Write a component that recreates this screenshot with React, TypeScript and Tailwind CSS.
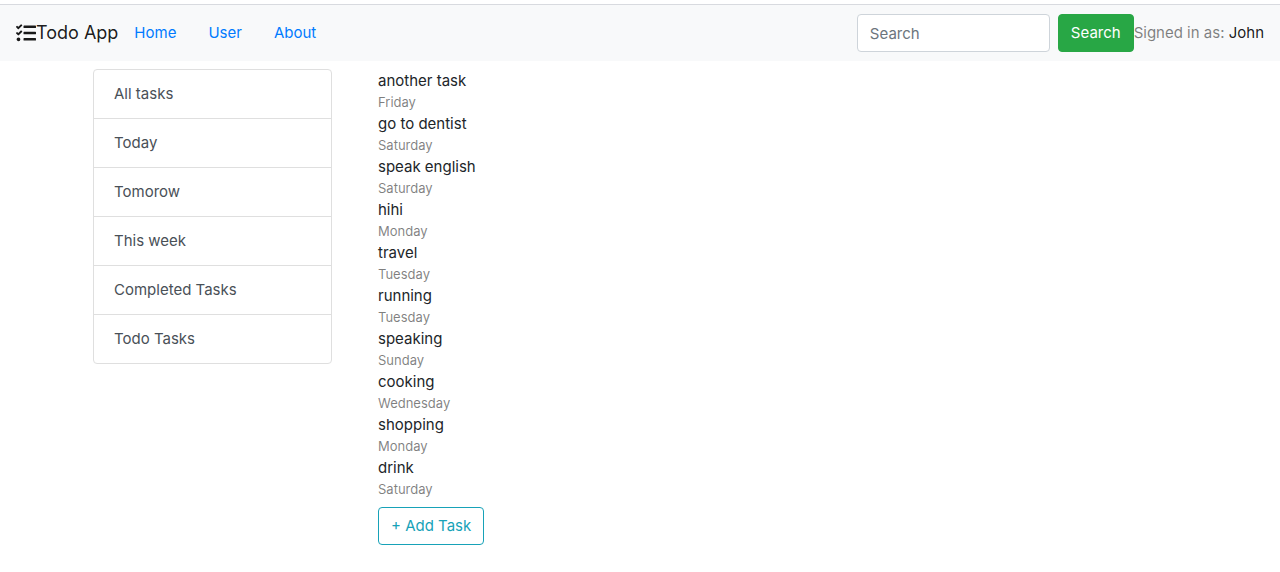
import { FaTasks } from "react-icons/fa";

const navLinks = ["Home", "User", "About"];

const filters = ["All tasks", "Today", "Tomorow", "This week", "Completed Tasks", "Todo Tasks"];

const tasks = [
  { title: "another task", day: "Friday" },
  { title: "go to dentist", day: "Saturday" },
  { title: "speak english", day: "Saturday" },
  { title: "hihi", day: "Monday" },
  { title: "travel", day: "Tuesday" },
  { title: "running", day: "Tuesday" },
  { title: "speaking", day: "Sunday" },
  { title: "cooking", day: "Wednesday" },
  { title: "shopping", day: "Monday" },
  { title: "drink", day: "Saturday" },
];

function Navbar() {
  return (
    <header className="mt-1 flex items-center border-t border-[#d8dadf] bg-[#f8f9fa] px-4 py-2">
      <a href="#" className="flex items-center text-lg leading-[30px] text-black/90">
        <FaTasks className="size-5" aria-hidden="true" />
        Todo App
      </a>
      <nav className="flex">
        {navLinks.map((label) => (
          <a key={label} href="#" className="px-4 py-2 leading-6 text-[#007bff]">
            {label}
          </a>
        ))}
      </nav>
      <form className="ml-auto flex gap-2" onSubmit={(e) => e.preventDefault()}>
        <input
          type="text"
          aria-label="Search"
          placeholder="Search"
          className="h-[38px] w-[193px] rounded border border-[#ced4da] bg-white px-3 text-[#495057] placeholder:text-[#6c757d]"
        />
        <button type="submit" className="h-[38px] rounded border border-[#28a745] bg-[#28a745] px-3 text-white">
          Search
        </button>
      </form>
      <p className="leading-6 text-black/50">
        Signed in as:{" "}
        <a href="#" className="text-black/90">
          John
        </a>
      </p>
    </header>
  );
}

export default function App() {
  return (
    <div className="font-['Inter',sans-serif] text-[15px] text-[#212529]">
      <Navbar />
      <main className="mx-auto grid max-w-[1140px] grid-cols-4">
        <aside className="px-[15px]">
          <div className="m-2 divide-y divide-[#dfdfdf] rounded border border-[#dfdfdf]">
            {filters.map((label) => (
              <button key={label} type="button" className="block w-full px-5 py-3 text-left leading-6 text-[#495057]">
                {label}
              </button>
            ))}
          </div>
        </aside>
        <section className="col-span-3 px-[15px]">
          <ul className="mx-2 mt-2">
            {tasks.map((task) => (
              <li key={task.title}>
                <p className="leading-6">{task.title}</p>
                <p className="text-[13px] leading-[19px] text-black/50">{task.day}</p>
              </li>
            ))}
          </ul>
          <button type="button" className="m-2 h-[38px] rounded border border-[#17a2b8] px-3 text-[#17a2b8]">
            + Add Task
          </button>
        </section>
      </main>
    </div>
  );
}
